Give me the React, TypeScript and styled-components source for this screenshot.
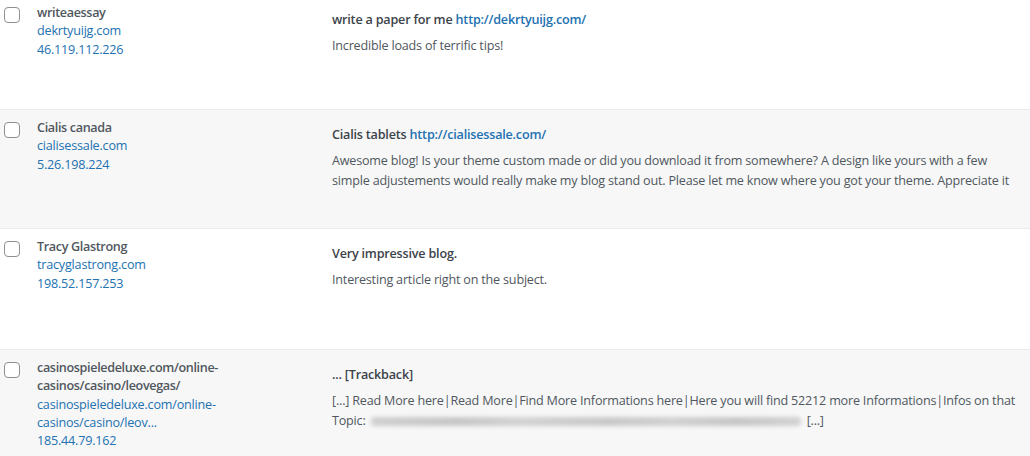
import React from "react";
import styled, { createGlobalStyle } from "styled-components";

const Global = createGlobalStyle`
  html, body { margin: 0; padding: 0; background: #ffffff; }
  body {
    font-family: "Open Sans", "Noto Sans", "Liberation Sans", sans-serif;
    font-size: 12.6px;
    letter-spacing: -0.2px;
    color: #50575e;
    overflow: hidden;
  }
`;

const List = styled.div`
  display: flex;
  flex-direction: column;
  margin-top: -5px;
`;

const Row = styled.div<{ $alt?: boolean; $h: number }>`
  display: grid;
  grid-template-columns: 37px 295px 1fr;
  min-height: ${(p) => p.$h}px;
  box-sizing: border-box;
  background: ${(p) => (p.$alt ? "#f7f7f7" : "#ffffff")};
  border-top: 1px solid #ebebeb;
  &:first-child { border-top: none; }
`;

const CheckCell = styled.div`
  padding: 12px 0 0 4px;
`;

const Check = styled.span`
  display: block;
  width: 16px;
  height: 16px;
  box-sizing: border-box;
  border: 1px solid #8c8f94;
  border-radius: 4px;
  background: #fff;
`;

const AuthorCell = styled.div`
  padding: 9px 40px 0 0;
  line-height: 18.3px;
  display: flex;
  flex-direction: column;
`;

const AuthorName = styled.strong`
  font-weight: 600;
  color: #50575e;
  letter-spacing: -0.35px;
`;

const Link = styled.a`
  color: #2271b1;
  text-decoration: none;
`;

const CommentCell = styled.div`
  padding: 15px 8px 0 0;
`;

const Title = styled.div`
  font-weight: 600;
  color: #3c434a;
  line-height: 19px;
  margin-bottom: 7px;
`;

const Body = styled.p`
  margin: 0;
  line-height: 20px;
  color: #50575e;
`;

const Blurred = styled.span`
  display: inline-block;
  width: 430px;
  height: 9px;
  margin: 6px 6px 0 2px;
  vertical-align: top;
  border-radius: 4px;
  background: linear-gradient(
    90deg,
    #cfcfcf 0%,
    #c6c6c6 20%,
    #d2d2d2 35%,
    #c8c8c8 55%,
    #d0d0d0 70%,
    #c6c6c6 85%,
    #d2d2d2 100%
  );
  filter: blur(2px);
`;

export default function App() {
  return (
    <>
      <Global />
      <List>
        <Row $h={114}>
          <CheckCell><Check /></CheckCell>
          <AuthorCell>
            <AuthorName>writeaessay</AuthorName>
            <Link>dekrtyuijg.com</Link>
            <Link>46.119.112.226</Link>
          </AuthorCell>
          <CommentCell>
            <Title>
              write a paper for me <Link>http://dekrtyuijg.com/</Link>
            </Title>
            <Body>Incredible loads of terrific tips!</Body>
          </CommentCell>
        </Row>
        <Row $alt $h={119}>
          <CheckCell><Check /></CheckCell>
          <AuthorCell>
            <AuthorName>Cialis canada</AuthorName>
            <Link>cialisessale.com</Link>
            <Link>5.26.198.224</Link>
          </AuthorCell>
          <CommentCell>
            <Title>
              Cialis tablets <Link>http://cialisessale.com/</Link>
            </Title>
            <Body>
              Awesome blog! Is your theme custom made or did you download it from somewhere? A design like yours with a few simple adjustements would really make my blog stand out. Please let me know where you got your theme. Appreciate it
            </Body>
          </CommentCell>
        </Row>
        <Row $h={121}>
          <CheckCell><Check /></CheckCell>
          <AuthorCell>
            <AuthorName>Tracy Glastrong</AuthorName>
            <Link>tracyglastrong.com</Link>
            <Link>198.52.157.253</Link>
          </AuthorCell>
          <CommentCell>
            <Title>Very impressive blog.</Title>
            <Body>Interesting article right on the subject.</Body>
          </CommentCell>
        </Row>
        <Row $alt $h={120}>
          <CheckCell><Check /></CheckCell>
          <AuthorCell>
            <AuthorName>casinospieledeluxe.com/online-casinos/casino/leovegas/</AuthorName>
            <Link>casinospieledeluxe.com/online-casinos/casino/leov...</Link>
            <Link>185.44.79.162</Link>
          </AuthorCell>
          <CommentCell>
            <Title>... [Trackback]</Title>
            <Body>
              [...] Read More here|Read More|Find More Informations here|Here you will find 52212 more Informations|Infos on that Topic:{" "}
              <Blurred />[...]
            </Body>
          </CommentCell>
        </Row>
      </List>
    </>
  );
}
